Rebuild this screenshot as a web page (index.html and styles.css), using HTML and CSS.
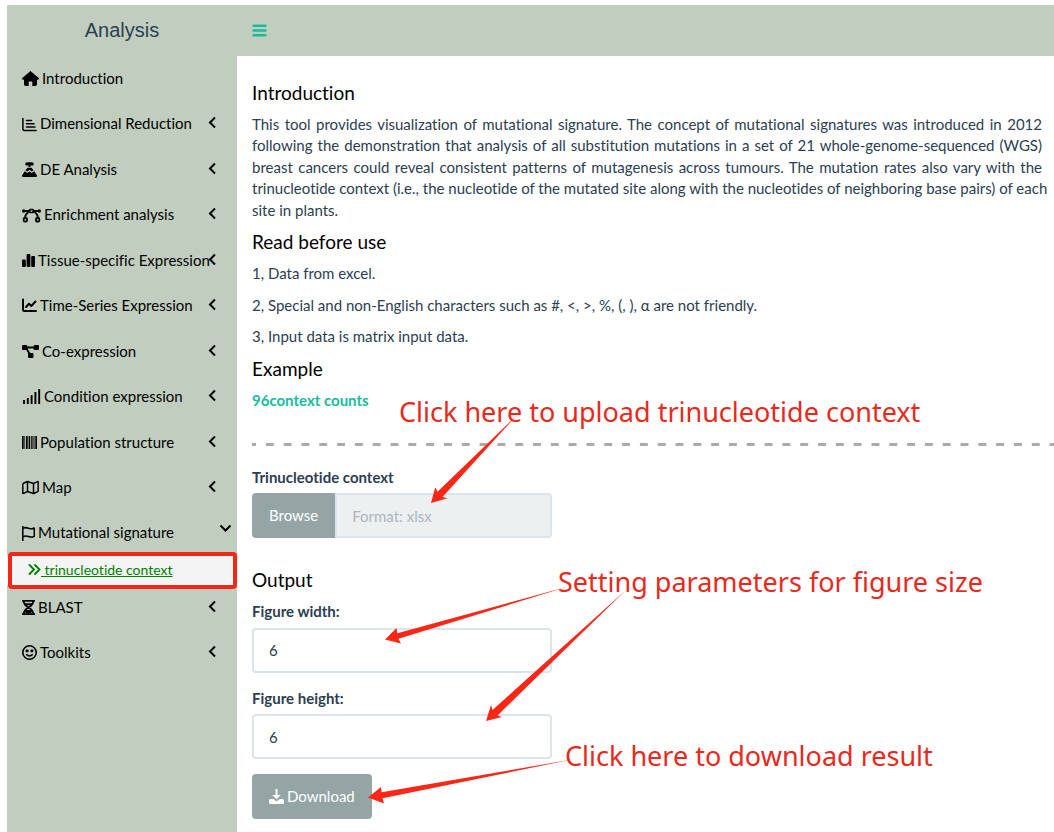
FILE: index.html
```html
<!DOCTYPE html>
<html lang="en">
<head>
<meta charset="utf-8">
<title>Analysis</title>
<link rel="stylesheet" href="styles.css">
</head>
<body>
<div class="page">
  <header class="topbar">
    <div class="brand">Analysis</div>
    <button class="toggle" type="button" aria-label="Toggle navigation">
      <svg class="i15" viewBox="0 0 15 15"><path d="M1.500 2.700h12M1.500 7.500h12M1.500 12.300h12" fill="none" stroke="currentColor" stroke-width="2.400" stroke-linecap="round"/></svg>
    </button>
  </header>
  <div class="body">
    <nav class="sidebar" aria-label="Analysis tools">
      <ul class="menu">
        <li><a class="item" href="#"><svg class="i17" viewBox="0 0 17 15"><path d="M8.500 0 .3 6.900Q-.5 8.500 1 8.700H2V13.300Q2 15 3.700 15H6.700V10.500H10.300V15H13.300Q15 15 15 13.300V8.700H16Q17.500 8.500 16.700 6.900Z"/></svg>Introduction</a></li>
        <li><a class="item" href="#"><svg class="i15 line" viewBox="0 0 15 15"><path d="M.9 1.500V12Q.9 13.500 2.400 13.500H14.200M4.500 3.500H9.500M4.500 6.700H12M4.500 10H13"/></svg>Dimensional Reduction<svg class="chev" viewBox="0 0 8 13"><path d="M7 1.500 2 6.500l5 5"/></svg></a></li>
        <li><a class="item" href="#"><svg class="i15" viewBox="0 0 15 15"><path d="M4 .5Q5 0 6 .4 7.500-.4 9 .4 10 0 11 .6 12.500 2 11 3.500H8.500V5H6.500V3.500H4Q2.500 2 4 .5ZM5.500 5.700H9.500L11.500 8.300 9.700 9.500 7.500 7.800 5.300 9.500 3.500 8.300ZM2.800 9.200 5.200 11 7.500 9.400 9.800 11 12.200 9.200 15 13.500Q15.200 15 14 15H1Q-.2 15 0 13.500Z"/></svg>DE Analysis<svg class="chev" viewBox="0 0 8 13"><path d="M7 1.500 2 6.500l5 5"/></svg></a></li>
        <li><a class="item" href="#"><svg class="i19" viewBox="0 0 19 15"><path d="M2 3H17M6.500 4Q3.300 6 3 10M12.500 4Q15.700 6 16 10" fill="none" stroke="currentColor" stroke-width="1.800"/><circle cx="1.700" cy="3" r="1.700"/><circle cx="17.300" cy="3" r="1.700"/><rect x="7" y=".7" width="5" height="4.600" rx="1"/><rect x="8.700" y="2.200" width="1.600" height="1.600" fill="#c1cebf"/><g fill="none" stroke="currentColor" stroke-width="1.800"><rect x="1.700" y="10" width="3.300" height="3.500" rx="1"/><rect x="14" y="10" width="3.300" height="3.500" rx="1"/></g></svg>Enrichment analysis<svg class="chev" viewBox="0 0 8 13"><path d="M7 1.500 2 6.500l5 5"/></svg></a></li>
        <li><a class="item" href="#"><svg class="i13" viewBox="0 0 13 15"><rect x="0" y="6.500" width="3.800" height="7.500" rx="1"/><rect x="4.600" y="1" width="3.800" height="13" rx="1"/><rect x="9.200" y="3" width="3.800" height="11" rx="1"/></svg>Tissue-specific Expression<svg class="chev" viewBox="0 0 8 13"><path d="M7 1.500 2 6.500l5 5"/></svg></a></li>
        <li><a class="item" href="#"><svg class="i15 thick" viewBox="0 0 15 15"><path d="M1 1.500V11.500Q1 13 2.500 13H14M4 9 7 5.800 9.300 8 13.500 3.500"/></svg>Time-Series Expression<svg class="chev" viewBox="0 0 8 13"><path d="M7 1.500 2 6.500l5 5"/></svg></a></li>
        <li><a class="item" href="#"><svg class="i17" viewBox="0 0 17 15"><path d="M3 3.500H14M4 4 8.500 11" fill="none" stroke="currentColor" stroke-width="1.800"/><rect x="0" y="1" width="5.300" height="5" rx="1"/><rect x="11.700" y="1" width="5.300" height="5" rx="1"/><rect x="6" y="9" width="5.500" height="5" rx="1"/></svg>Co-expression<svg class="chev" viewBox="0 0 8 13"><path d="M7 1.500 2 6.500l5 5"/></svg></a></li>
        <li><a class="item" href="#"><svg class="i19" viewBox="0 0 19 15"><path d="M2 11V15M5.800 9V15M9.600 6V15M13.400 3V15M17.200 0V15" fill="none" stroke="currentColor" stroke-width="1.900"/></svg>Condition expression<svg class="chev" viewBox="0 0 8 13"><path d="M7 1.500 2 6.500l5 5"/></svg></a></li>
        <li><a class="item" href="#"><svg class="i15" viewBox="0 0 15 15"><path d="M0 1H1.700V14H0ZM2.400 1H3.100V14H2.400ZM4 1H5.700V14H4ZM6.600 1H8.200V14H6.600ZM9.200 1H10.600V14H9.200ZM11.500 1H12.500V14H11.500ZM13.300 1H15V14H13.300Z"/></svg>Population structure<svg class="chev" viewBox="0 0 8 13"><path d="M7 1.500 2 6.500l5 5"/></svg></a></li>
        <li><a class="item" href="#"><svg class="i17 line" viewBox="0 0 17 15"><path d="M.8 4.300Q.8 3.600 1.400 3.300L5.500 1.500 11.500 3.500 15.500 1.600Q16.200 1.400 16.200 2.200V10.700Q16.200 11.400 15.600 11.700L11.500 13.500 5.500 11.500 1.500 13.400Q.8 13.600.8 12.800ZM5.500 1.500V11.500M11.500 3.500V13.500"/></svg>Map<svg class="chev" viewBox="0 0 8 13"><path d="M7 1.500 2 6.500l5 5"/></svg></a></li>
        <li>
          <a class="item open" href="#"><svg class="i13 line" viewBox="0 0 13 15"><path d="M.8 0V15M.8 2.300Q3.500 1 6.500 2.200T12.300 2V10.300Q9.500 11.800 6.500 10.500T.8 10.800"/></svg>Mutational signature<svg class="chev-down" viewBox="0 0 13 8"><path d="M1.500 1.500 6.500 6.500l5-5"/></svg></a>
          <ul class="submenu">
            <li><a class="subitem" href="#"><svg class="i13" viewBox="0 0 13 15"><path d="M1.500 3 6 7.500 1.500 12M7 3l4.500 4.500L7 12" fill="none" stroke="currentColor" stroke-width="1.900" stroke-linecap="round"/></svg><span>&nbsp;trinucleotide context</span></a></li>
          </ul>
        </li>
        <li><a class="item" href="#"><svg class="i13" viewBox="0 0 13 15"><path d="M0 0H13V1.800H0ZM0 13.200H13V15H0Z"/><path d="M1.800 1Q1.800 5 6.500 7.500 11.200 10 11.200 14M11.200 1Q11.200 5 6.500 7.500 1.800 10 1.800 14M3 4.200H10M3 11H10M3.500 12.500H9.500" fill="none" stroke="currentColor" stroke-width="1.900"/></svg>BLAST<svg class="chev" viewBox="0 0 8 13"><path d="M7 1.500 2 6.500l5 5"/></svg></a></li>
        <li><a class="item" href="#"><svg class="i15" viewBox="0 0 15 15"><circle cx="7.500" cy="7.500" r="6.700" fill="none" stroke="currentColor" stroke-width="1.600"/><rect x="3.600" y="4.500" width="3" height="2.800" rx="1"/><rect x="8.400" y="4.500" width="3" height="2.800" rx="1"/><path d="M4.200 9.300Q7.500 12.600 10.800 9.300" fill="none" stroke="currentColor" stroke-width="1.600"/></svg>Toolkits<svg class="chev" viewBox="0 0 8 13"><path d="M7 1.500 2 6.500l5 5"/></svg></a></li>
      </ul>
    </nav>
    <main class="content">
      <h4>Introduction</h4>
      <p class="intro">This tool provides visualization of mutational signature. The concept of mutational signatures was introduced in 2012 following the demonstration that analysis of all substitution mutations in a set of 21 whole-genome-sequenced (WGS) breast cancers could reveal consistent patterns of mutagenesis across tumours. The mutation rates also vary with the <span class="keep">trinucleotide context (i.e., the nucleotide of the mutated site along with the nucleotides of neighboring base pairs) of each</span> site in plants.</p>
      <h4>Read before use</h4>
      <p>1, Data from excel.</p>
      <p>2, Special and non-English characters such as #, &lt;, &gt;, %, (, ), α are not friendly.</p>
      <p>3, Input data is matrix input data.</p>
      <h4>Example</h4>
      <a class="example" href="#">96context counts</a>
      <hr class="dashes">
      <form class="form">
        <label for="file">Trinucleotide context</label>
        <div class="upload">
          <button class="btn browse" type="button">Browse</button>
          <input class="field" id="file" type="text" placeholder="Format: xlsx" readonly>
        </div>
        <h4>Output</h4>
        <label for="fw">Figure width:</label>
        <input class="field" id="fw" type="text" value="6">
        <label for="fh">Figure height:</label>
        <input class="field" id="fh" type="text" value="6">
        <button class="btn download" type="button"><svg class="i15" viewBox="0 0 15 15"><path d="M6.500 0H8.500V6H11.700L7.500 10.300 3.300 6H6.500Z"/><path d="M1.500 10H4.300L7.500 12.500 10.700 10H13.500Q15 10 15 11.500V13.500Q15 15 13.500 15H1.500Q0 15 0 13.500V11.500Q0 10 1.500 10Z"/></svg>Download</button>
      </form>
    </main>
  </div>
  <svg class="arrows" width="1054" height="832" viewBox="0 0 1054 832" aria-hidden="true">
    <path d="M517 415 442.500 497 447.500 498.300 431 503 435.300 487.300 437.500 491.800Z"/>
    <path d="M568 586.500 398.500 638.800 401 643.500 385 639.500 396.500 628 397.300 633.300Z"/>
    <path d="M626 590 497.500 715.500 502 717 486 721 491 705 492.500 710Z"/>
    <path d="M572 759.500 382.500 798.300 384 803.500 368 797.500 381 787 381.500 792.300Z"/>
  </svg>
  <div class="note note-upload">Click here to upload trinucleotide context</div>
  <div class="note note-size">Setting parameters for figure size</div>
  <div class="note note-download">Click here to download result</div>
</div>
</body>
</html>
```

FILE: styles.css
```css
* { box-sizing: border-box; }
body {
  margin: 0;
  background: #fff;
  color: #2c3e50;
  font-family: Lato, "Liberation Sans", sans-serif;
  font-size: 15px;
  font-variant-ligatures: no-common-ligatures;
  line-height: 1.43;
}
.page {
  position: relative;
  display: flex;
  flex-direction: column;
  min-height: 100vh;
  padding: 5px 0 0 7px;
  overflow: hidden;
}
svg { flex: none; fill: currentColor; }
.topbar { display: flex; align-items: center; height: 51px; background: #c1cebf; }
.brand {
  width: 230px;
  text-align: center;
  font-family: "Liberation Sans", Arial, sans-serif;
  font-size: 20px;
}
.toggle { display: flex; padding: 0 15px; border: 0; background: none; color: #18bc9c; }
.body { display: flex; flex: 1; }
.sidebar { flex: none; width: 230px; background: #c1cebf; }
.menu, .submenu { margin: 0; padding: 0; list-style: none; }
.item {
  position: relative;
  display: flex;
  align-items: center;
  gap: 3px;
  padding: 12px 5px 12px 15px;
  color: #000;
  text-decoration: none;
  white-space: nowrap;
}
.i13, .i15, .i17, .i19 { height: 15px; }
.i13 { width: 13px; }
.i15 { width: 15px; }
.i17 { width: 17px; }
.i19 { width: 19px; }
.line { fill: none; stroke: currentColor; stroke-width: 1.5; stroke-linecap: round; stroke-linejoin: round; }
.thick { fill: none; stroke: currentColor; stroke-width: 2; stroke-linecap: round; stroke-linejoin: round; }
.chev, .chev-down { position: absolute; fill: none; stroke: currentColor; stroke-width: 2; }
.chev { top: 15px; right: 21px; width: 8px; height: 13px; }
.chev-down { top: 14px; right: 5px; width: 13px; height: 8px; }
.submenu { position: relative; padding-bottom: 1px; background: #f4f4f4; }
.submenu::after {
  content: "";
  position: absolute;
  inset: -4px 0 -4px 1px;
  border: 4px solid #f22717;
  border-radius: 4px;
  pointer-events: none;
}
.subitem {
  display: flex;
  align-items: center;
  padding: 4px 21px;
  color: #008000;
  font-size: 14px;
}
.content { flex: 1; min-width: 0; padding: 26px 12px 0 15px; }
h4 { margin: 10px 0; color: #000; font-size: 19px; font-weight: 400; line-height: 22px; }
.content > h4:first-child { margin-top: 0; }
p { margin: 0 0 10px; }
.intro { text-align: justify; }
@media (min-width: 1050px) {
  .keep { white-space: nowrap; }
}
.example { display: block; color: #18bc9c; font-weight: 700; text-decoration: none; }
.dashes {
  height: 3px;
  margin: 32px -12px 21px 0;
  border: 0;
  background: linear-gradient(90deg, #aaa 22%, transparent 22% 78%, #aaa 78%) 0 0 / 18px 3px round;
}
.form { display: flex; flex-direction: column; align-items: flex-start; }
label { margin-bottom: 5px; font-weight: 700; }
.field {
  width: 300px;
  height: 45px;
  margin-bottom: 15px;
  padding: 10px 15px;
  border: 2px solid #dce4ec;
  border-radius: 4px;
  background: #fff;
  color: #2c3e50;
  font: inherit;
}
.upload { display: flex; width: 300px; margin-bottom: 21px; }
.upload .field {
  flex: 1;
  width: 0;
  margin: 0;
  border-radius: 0 4px 4px 0;
  background: #ecf0f1;
}
.field::placeholder { color: #acb6c0; opacity: 1; }
.btn {
  display: flex;
  align-items: center;
  justify-content: center;
  gap: 3px;
  height: 45px;
  padding: 0 17px;
  border: 0;
  border-radius: 4px;
  background: #95a5a6;
  color: #fff;
  font: inherit;
}
.browse { border-radius: 4px 0 0 4px; }
.arrows { position: absolute; top: 0; left: 0; fill: #fb2616; pointer-events: none; }
.note {
  position: absolute;
  color: #e8291c;
  font-family: "Noto Sans", "Open Sans", sans-serif;
  font-size: 27px;
  line-height: 36px;
  white-space: nowrap;
}
.note-upload { top: 394px; left: 399px; }
.note-size { top: 564px; left: 558px; }
.note-download { top: 738px; left: 565px; }
```
